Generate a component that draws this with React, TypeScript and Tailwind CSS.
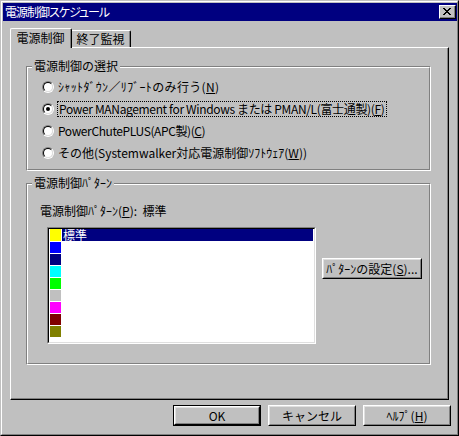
import React from 'react';

// Win95-style "電源制御スケジュール" dialog

const swatches = ['#ffff00', '#0000ff', '#000080', '#00ffff', '#00ff00', '#c0c0c0', '#ff00ff', '#800000', '#808000'];

const Radio = ({ checked }: { checked?: boolean }) => (
  <div className="w-[12px] h-[12px] rounded-full border border-t-[#808080] border-l-[#808080] border-r-white border-b-white shrink-0">
    <div className="w-full h-full rounded-full border border-t-black border-l-black border-r-[#dfdfdf] border-b-[#dfdfdf] bg-white flex items-center justify-center">
      {checked && <div className="w-[4px] h-[4px] rounded-full bg-black" />}
    </div>
  </div>
);

const Btn = ({ children, w, isDefault }: { children: React.ReactNode; w: string; isDefault?: boolean }) => (
  <div className={`${w} h-[21px] ${isDefault ? 'border border-black' : ''}`}>
    <div className="w-full h-full border border-t-white border-l-white border-r-black border-b-black">
      <div className="w-full h-full border border-t-[#dfdfdf] border-l-[#dfdfdf] border-r-[#808080] border-b-[#808080] flex items-center justify-center">
        {children}
      </div>
    </div>
  </div>
);

const GroupBox = ({ label, className, children }: { label: string; className: string; children: React.ReactNode }) => (
  <div className={`relative border border-t-[#808080] border-l-[#808080] border-r-white border-b-white ${className}`}>
    <div className="w-full h-full border border-t-white border-l-white border-r-[#808080] border-b-[#808080]">
      {children}
    </div>
    <span className="absolute left-[5px] top-[-7px] px-[2px] bg-[#c0c0c0] leading-[12px]">{label}</span>
  </div>
);

export default function App() {
  return (
    <div className="w-[459px] h-[436px] bg-[#c0c0c0] text-[12px] leading-[12px] text-black font-['Noto_Sans_CJK_JP','Noto_Sans',sans-serif] border border-t-[#c0c0c0] border-l-[#c0c0c0] border-r-black border-b-black">
      <div className="w-full h-full border border-t-white border-l-white border-r-[#808080] border-b-[#808080] pl-[1px] pt-[1px] flex flex-col">
        {/* Title bar */}
        <div className="h-[18px] bg-[#000080] flex items-center justify-between pl-[2px]">
          <span className="text-white text-[12px] tracking-[-1px] [font-feature-settings:'palt']">電源制御スケジュール</span>
          <div className="w-[17px] h-[14px] mr-[1px] bg-[#c0c0c0] border border-t-white border-l-white border-r-black border-b-black">
            <div className="w-full h-full border-r border-b border-r-[#808080] border-b-[#808080] flex items-center justify-center">
              <svg width="8" height="7" viewBox="0 0 8 7" shapeRendering="crispEdges">
                <path d="M0 0h2v1h-2zM6 0h2v1h-2zM1 1h2v1h-2zM5 1h2v1h-2zM2 2h4v1h-4zM3 3h2v1h-2zM2 4h4v1h-4zM1 5h2v1h-2zM5 5h2v1h-2zM0 6h2v1h-2zM6 6h2v1h-2z" fill="#000" />
              </svg>
            </div>
          </div>
        </div>

        {/* Body */}
        <div className="pl-[7px] pt-[7px] flex flex-col">
          {/* Tabs */}
          <div className="flex items-end h-[19px]">
            <div className="relative z-10 w-[62px] h-[20px] -mb-[1px] bg-[#c0c0c0] rounded-tl-[2px] rounded-tr-[2px] border-t border-l border-r border-t-white border-l-white border-r-black flex items-start">
              <div className="w-full h-full border-r border-r-[#808080] flex items-center justify-center pb-[1px]">電源制御</div>
            </div>
            <div className="w-[59px] h-[17px] rounded-tr-[2px] border-t border-r border-t-white border-r-black">
              <div className="w-full h-full border-r border-r-[#808080] flex items-center justify-center">終了監視</div>
            </div>
          </div>

          {/* Tab panel */}
          <div className="w-[439px] h-[353px] border border-t-white border-l-white border-r-black border-b-black">
            <div className="w-full h-full border-r border-b border-r-[#808080] border-b-[#808080] pl-[15px] pt-[18px] flex flex-col">
              <GroupBox label="電源制御の選択" className="w-[405px] h-[105px]">
                <div className="pl-[14px] pt-[8px] flex flex-col">
                  <div className="h-[22px] flex items-center gap-[4px]">
                    <Radio />
                    <span className="tracking-[0.35px]">ｼｬｯﾄﾀﾞｳﾝ／ﾘﾌﾞｰﾄのみ行う(<span className="underline">N</span>)</span>
                  </div>
                  <div className="h-[22px] flex items-center gap-[3px]">
                    <Radio checked />
                    <span className="border border-dotted border-black px-[1px] h-[16px] flex items-center whitespace-pre tracking-[-0.35px]">Power MANagement for Windows または PMAN/L(富士通製)(<span className="underline">F</span>)</span>
                  </div>
                  <div className="h-[22px] flex items-center gap-[4px]">
                    <Radio />
                    <span className="tracking-[-0.4px]">PowerChutePLUS(APC製)(<span className="underline">C</span>)</span>
                  </div>
                  <div className="h-[22px] flex items-center gap-[4px]">
                    <Radio />
                    <span>その他(Systemwalker対応電源制御ｿﾌﾄｳｪｱ(<span className="underline">W</span>))</span>
                  </div>
                </div>
              </GroupBox>

              <GroupBox label="電源制御ﾊﾟﾀｰﾝ" className="w-[405px] h-[182px] mt-[12px]">
                <div className="pl-[12px] pt-[20px] flex flex-col">
                  <span className="whitespace-pre">電源制御ﾊﾟﾀｰﾝ(<span className="underline">P</span>):  標準</span>
                  <div className="flex items-start mt-[10px] ml-[7px]">
                    <div className="w-[269px] h-[117px] border border-t-[#808080] border-l-[#808080] border-r-white border-b-white">
                      <div className="w-full h-full border border-t-black border-l-black border-r-[#dfdfdf] border-b-[#dfdfdf] bg-white flex flex-col">
                        {swatches.map((c, i) => (
                          <div key={c} className="h-[12px] flex shrink-0">
                            <div className={`w-[11px] ml-[1px] ${i === 0 ? 'h-[12px]' : 'h-[11px] mt-[1px]'}`} style={{ backgroundColor: c }} />
                            {i === 0 && (
                              <div className="flex-1 ml-[1px] mr-[1px] h-[12px] bg-[#000080] text-white pl-[1px] flex items-center">標準</div>
                            )}
                          </div>
                        ))}
                      </div>
                    </div>
                    <div className="ml-[6px] mt-[31px]">
                      <Btn w="w-[100px]">
                        <span>ﾊﾟﾀｰﾝの設定(<span className="underline">S</span>)...</span>
                      </Btn>
                    </div>
                  </div>
                </div>
              </GroupBox>
            </div>
          </div>

          {/* Dialog buttons */}
          <div className="flex justify-end gap-[7px] mt-[5px] mr-[6px]">
            <Btn w="w-[88px]" isDefault>OK</Btn>
            <Btn w="w-[88px]">キャンセル</Btn>
            <Btn w="w-[88px]">
              <span>ﾍﾙﾌﾟ(<span className="underline">H</span>)</span>
            </Btn>
          </div>
        </div>
      </div>
    </div>
  );
}
